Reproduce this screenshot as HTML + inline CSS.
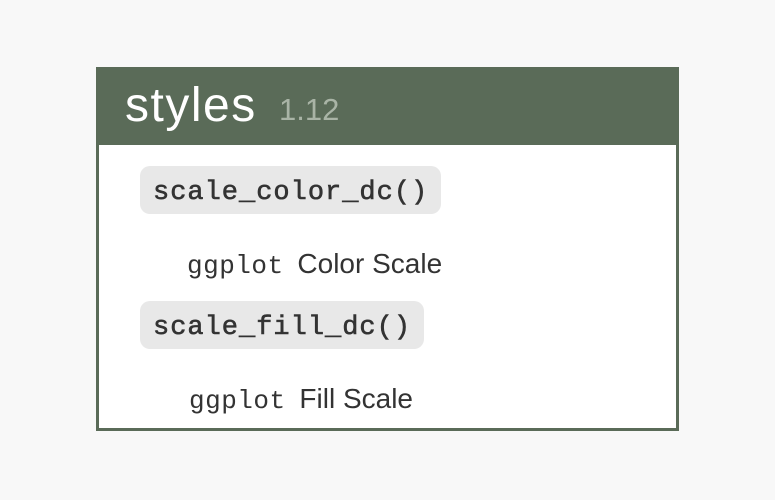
<!DOCTYPE html>
<html><head><style>
body{margin:0;width:775px;height:500px;background:#f8f8f8;position:relative;overflow:hidden;font-family:"Liberation Sans",sans-serif;}
.box{position:absolute;left:96px;top:67px;width:577px;height:361px;border:3px solid #5a6b58;border-top:none;background:#fff;}
.hdr{position:absolute;left:96px;top:67px;width:583px;height:78px;background:#5a6b58;}
.t{position:absolute;left:125px;top:79px;font-size:48px;letter-spacing:1.5px;color:#fff;line-height:54px;}
.v{position:absolute;left:279px;top:92px;font-size:31px;color:#a9b4a6;line-height:36px;}
.pill{position:absolute;background:#e8e8e8;border-radius:10px;height:48px;}
.code{position:absolute;font-family:"Liberation Mono",monospace;font-size:27px;color:#333;letter-spacing:1px;line-height:32px;-webkit-text-stroke:0.6px #333;}
.d{position:absolute;font-size:28px;color:#333;line-height:32px;}
.d span{font-family:"Liberation Mono",monospace;font-size:26px;letter-spacing:0.5px;margin-right:6px;}
</style></head><body>
<div class="box"></div>
<div class="hdr"></div>
<div class="t">styles</div>
<div class="v">1.12</div>
<div class="pill" style="left:140px;top:166px;width:301px"></div>
<div class="code" style="left:153px;top:177px">scale_color_dc()</div>
<div class="d" style="left:187px;top:248px"><span>ggplot</span> Color Scale</div>
<div class="pill" style="left:140px;top:301px;width:284px"></div>
<div class="code" style="left:153px;top:312px">scale_fill_dc()</div>
<div class="d" style="left:189px;top:383px"><span>ggplot</span> Fill Scale</div>
</body></html>
